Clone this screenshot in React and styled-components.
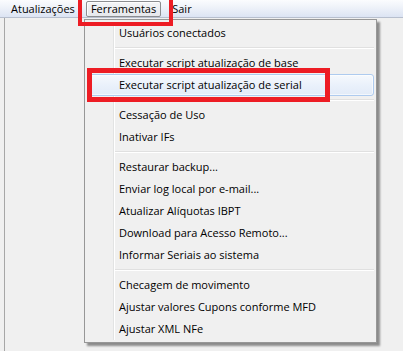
import React from "react";
import styled, { createGlobalStyle } from "styled-components";

const GlobalStyle = createGlobalStyle`
  html, body { margin: 0; padding: 0; background: #f0f0f0; }
  body { font-family: "Open Sans", "Noto Sans", sans-serif; font-size: 11px; color: #000; }
`;

const Window = styled.div`
  position: relative;
  width: 403px;
  height: 351px;
  overflow: hidden;
  display: flex;
  flex-direction: column;
  background: #f0f0f0;
`;

const MenuBar = styled.div`
  box-sizing: border-box;
  height: 18px;
  padding: 1px 0 0 6px;
  display: flex;
  align-items: flex-start;
  gap: 6px;
  background: linear-gradient(to bottom, #fbfcfe 0%, #eef2f9 45%, #dce4f3 100%);
  border-bottom: 1px solid #b7bfce;
`;

const BarItem = styled.div`
  height: 14px;
  line-height: 14px;
  padding: 0 4px;
  border: 1px solid ${(p) => (p.$open ? "#8b8d90" : "transparent")};
  border-radius: 2px;
  white-space: nowrap;
  background: ${(p) =>
    p.$open ? "linear-gradient(to bottom, #f4f5f7 0%, #e6e8ec 100%)" : "transparent"};
  box-shadow: ${(p) => (p.$open ? "inset 1px 1px 0 #fdfdfd" : "none")};
`;

const Workspace = styled.div`
  flex: 1;
  margin-left: 4px;
  border-left: 1px solid #a7a7a7;
`;

const Dropdown = styled.div`
  position: absolute;
  left: 84px;
  top: 19px;
  box-sizing: border-box;
  width: 293px;
  padding: 2px;
  background: #f0f0f0;
  border: 1px solid #979797;
  box-shadow: 3px 3px 2px rgba(0, 0, 0, 0.42);
  display: flex;
  flex-direction: column;

  &::before {
    content: "";
    position: absolute;
    left: 28px;
    top: 2px;
    bottom: 2px;
    width: 1px;
    background: #e2e3e3;
    box-shadow: 1px 0 0 #ffffff;
  }
`;

const Item = styled.div`
  position: relative;
  box-sizing: border-box;
  height: 22px;
  line-height: 20px;
  padding-left: 31px;
  border: 1px solid ${(p) => (p.$hover ? "#aecbef" : "transparent")};
  border-radius: 3px;
  white-space: nowrap;
  background: ${(p) =>
    p.$hover
      ? "linear-gradient(to bottom, #f6f9fd 0%, #eaf1fb 50%, #e2ebf8 100%)"
      : "transparent"};
  box-shadow: ${(p) => (p.$hover ? "inset 0 0 0 1px rgba(255,255,255,0.6)" : "none")};
`;

const Separator = styled.div`
  position: relative;
  height: 8px;
  &::after {
    content: "";
    position: absolute;
    left: 28px;
    right: 0;
    top: 3px;
    height: 1px;
    background: #e0e0e0;
    box-shadow: 0 1px 0 #ffffff;
  }
`;

const Mark = styled.div`
  position: absolute;
  left: ${(p) => p.$x}px;
  top: ${(p) => p.$y}px;
  width: ${(p) => p.$w}px;
  height: ${(p) => p.$h}px;
  box-sizing: border-box;
  border: ${(p) => p.$t}px solid #ed1c24;
  pointer-events: none;
`;

const groups = [
  ["Usuários conectados"],
  ["Executar script atualização de base", "Executar script atualização de serial"],
  ["Cessação de Uso", "Inativar IFs"],
  [
    "Restaurar backup...",
    "Enviar log local por e-mail...",
    "Atualizar Alíquotas IBPT",
    "Download para Acesso Remoto...",
    "Informar Seriais ao sistema",
  ],
  ["Checagem de movimento", "Ajustar valores Cupons conforme MFD", "Ajustar XML NFe"],
];

export default function App() {
  return (
    <Window>
      <GlobalStyle />
      <MenuBar>
        <BarItem>Atualizações</BarItem>
        <BarItem $open>Ferramentas</BarItem>
        <BarItem>Sair</BarItem>
      </MenuBar>
      <Workspace />
      <Dropdown>
        {groups.map((g, gi) => (
          <React.Fragment key={gi}>
            {gi > 0 && <Separator />}
            {g.map((label) => (
              <Item key={label} $hover={label === "Executar script atualização de serial"}>
                {label}
              </Item>
            ))}
          </React.Fragment>
        ))}
      </Dropdown>
      <Mark $x={78} $y={-10} $w={95} $h={36} $t={4} />
      <Mark $x={87} $y={68} $w={243} $h={34} $t={5} />
    </Window>
  );
}
